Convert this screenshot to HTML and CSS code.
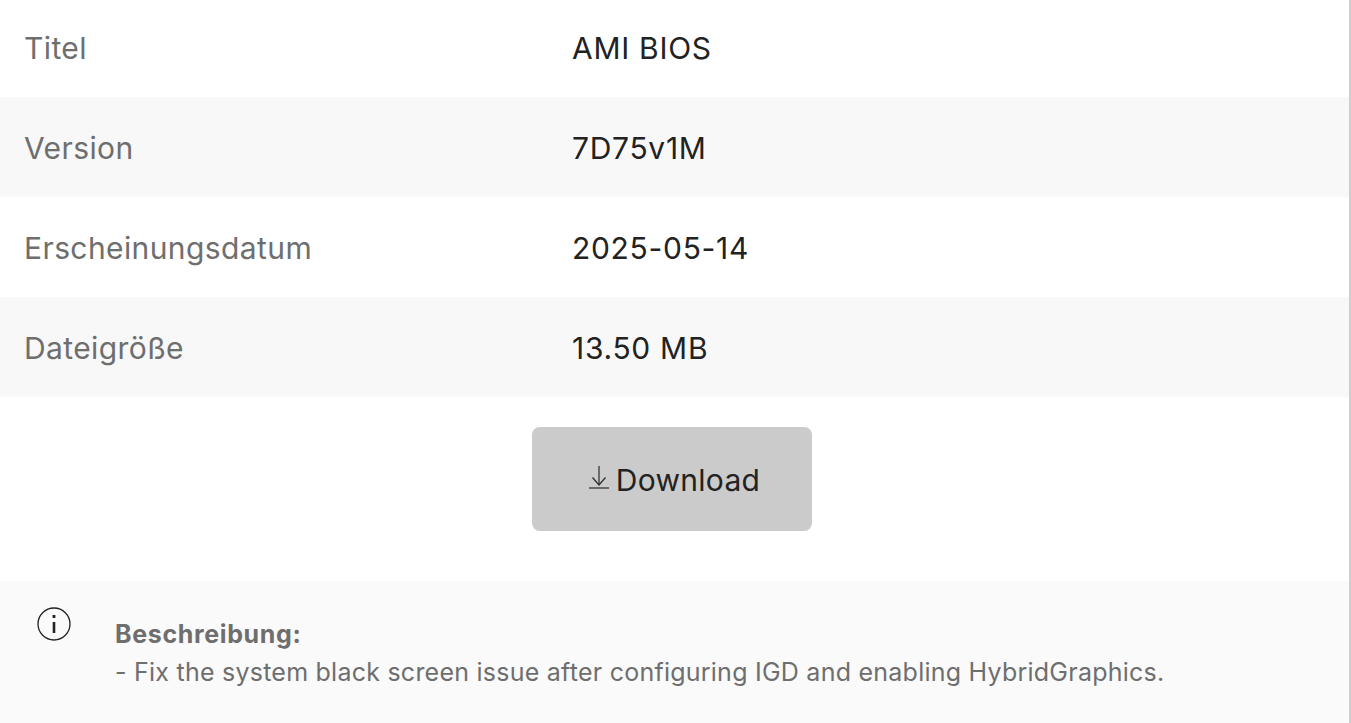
FILE: index.html
```html
<!DOCTYPE html>
<html lang="de">
  <head>
    <meta charset="UTF-8" />
    <meta name="viewport" content="width=device-width, initial-scale=1.0" />
    <title>Download</title>
    <link rel="stylesheet" href="styles.css">
  </head>
  <body>
    <div class="container">
      <div class="row">
        <div class="label">Titel</div>
        <div class="value">AMI BIOS</div>
      </div>
      <div class="row">
        <div class="label">Version</div>
        <div class="value">7D75v1M</div>
      </div>
      <div class="row">
        <div class="label">Erscheinungsdatum</div>
        <div class="value">2025-05-14</div>
      </div>
      <div class="row">
        <div class="label">Dateigröße</div>
        <div class="value">13.50 MB</div>
      </div>

      <div class="download-wrap">
        <a class="download-btn" href="#">
          <svg class="download-icon" width="22" height="24" viewBox="0 0 22 24" fill="none" stroke="#2b2b2b" stroke-width="1.2">
            <path d="M11 0V19" />
            <path d="M4.500 11.500L11 19L17.500 11.500" />
            <path d="M1 22H21" />
          </svg>
          <span class="download-text">Download</span>
        </a>
      </div>

      <div class="note">
        <svg class="note-icon" width="34" height="34" viewBox="0 0 34 34" fill="none" stroke="#222" stroke-width="1.3">
          <circle cx="17" cy="17" r="16" />
          <path d="M17 15V26" stroke-width="2.6" />
          <path d="M17 8V11" stroke-width="2.8" />
        </svg>
        <div class="note-text">
          <strong>Beschreibung:</strong>
          <p>- Fix the system black screen issue after configuring IGD and enabling HybridGraphics.</p>
        </div>
      </div>
    </div>
  </body>
</html>
```

FILE: styles.css
```css
html,
body {
  margin: 0;
  height: 100%;
  overflow: hidden;
}

body {
  font-family: Inter, "Liberation Sans", sans-serif;
  background-color: white;
  color: #222;
}

.container {
  width: 1349px;
  height: 723px;
  border-right: 2px solid #cfcfcf;
}

.row {
  display: flex;
  align-items: center;
  box-sizing: border-box;
  height: 100px;
  padding-top: 2px;
  font-size: 30px;
}

.row:first-child {
  height: 97px;
  padding-top: 0;
  padding-bottom: 2px;
}

.row:nth-child(even) {
  background-color: #f8f8f8;
}

.label {
  width: 548px;
  padding-left: 24px;
  color: #6e6e6e;
  letter-spacing: 0.4px;
}

.value {
  letter-spacing: 0.7px;
}

.download-wrap {
  display: flex;
  justify-content: center;
  padding-top: 30px;
  padding-right: 5px;
  padding-bottom: 50px;
}

.download-btn {
  display: flex;
  align-items: center;
  justify-content: center;
  gap: 6px;
  box-sizing: border-box;
  width: 280px;
  height: 104px;
  padding-left: 4px;
  background-color: #cbcbcb;
  border-radius: 8px;
  font-size: 30px;
  letter-spacing: 0.3px;
  color: #222;
  text-decoration: none;
}

.download-icon {
  margin-bottom: 3px;
}

.download-text {
  padding-top: 2px;
}

.note {
  display: flex;
  box-sizing: border-box;
  height: 142px;
  padding: 26px 0 0 37px;
  background-color: #fafafa;
}

.note-icon {
  flex-shrink: 0;
}

.note-text {
  margin-left: 44px;
  padding-top: 12px;
  font-size: 25px;
  letter-spacing: 0.24px;
  color: #6e6e6e;
}

.note-text strong {
  letter-spacing: 0.65px;
}

.note-text p {
  margin: 8px 0 0;
}
```
